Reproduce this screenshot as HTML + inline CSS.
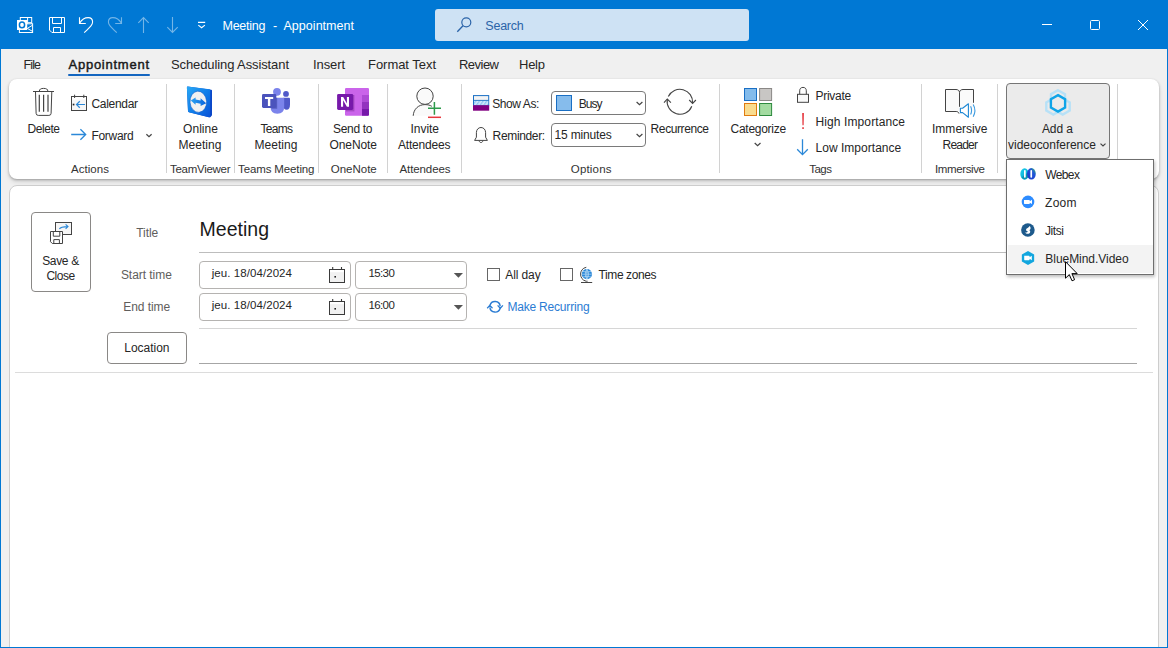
<!DOCTYPE html><html><head><meta charset="utf-8"><title>Meeting - Appointment</title><style>
html,body{margin:0;padding:0}
body{width:1168px;height:648px;overflow:hidden;position:relative;background:#f0f0f0;font-family:"Liberation Sans",sans-serif;}
.a{position:absolute}
.t{position:absolute;white-space:pre;line-height:16px;height:16px}
svg{position:absolute;overflow:visible}
#tb{left:0;top:0;width:1168px;height:49px;background:#0078d4}
#search{left:435px;top:9px;width:314px;height:32px;background:#cee2f4;border-radius:3px}
#rib{left:9px;top:79px;width:1150px;height:99.5px;background:#fff;border-radius:8px;box-shadow:0 1px 2.5px rgba(0,0,0,.3),0 3px 5px rgba(0,0,0,.10)}
#form{left:9px;top:184.6px;width:1147.5px;height:480px;background:#fff;border:1px solid #cdcdcd;border-radius:8px;box-sizing:content-box}
.sep{position:absolute;width:1px;top:84px;height:89px;background:#d2d2d2}
.combo{position:absolute;box-sizing:border-box;border:1px solid #7a7a7a;border-radius:4px;background:#fff}
.box{position:absolute;box-sizing:border-box;border:1px solid #b5b3b1;border-radius:4px;background:#fff}
.cb{position:absolute;box-sizing:border-box;border:1px solid #666;background:#fff;width:13px;height:13px}
.hl{position:absolute;height:1px}
</style></head><body>
<div class="a" id="tb"></div>
<div class="a" id="search"></div>
<div class="a" id="rib"></div>
<div class="a" id="form"></div>
<div class="a" style="left:68px;top:73.7px;width:81.5px;height:2px;background:#1466c0;border-radius:1px"></div>
<div class="sep" style="left:166px"></div>
<div class="sep" style="left:234px"></div>
<div class="sep" style="left:318px"></div>
<div class="sep" style="left:387px"></div>
<div class="sep" style="left:461px"></div>
<div class="sep" style="left:719px"></div>
<div class="sep" style="left:921px"></div>
<div class="sep" style="left:997px"></div>
<div class="sep" style="left:1117px"></div>
<div class="a" style="left:1006px;top:83px;width:104px;height:76px;box-sizing:border-box;background:#ebebeb;border:1px solid #767676;border-radius:4px"></div>
<div class="combo" style="left:551px;top:91px;width:95px;height:24px"></div>
<div class="combo" style="left:551px;top:123.3px;width:95px;height:23.7px"></div>
<div class="a" style="left:555.5px;top:95px;width:16.7px;height:15.8px;box-sizing:border-box;background:#86bcec;border:1px solid #1a6fc4"></div>
<div class="a" style="left:31px;top:212px;width:60px;height:79.5px;box-sizing:border-box;border:1px solid #8a8886;border-radius:4px;background:#fff"></div>
<div class="hl" style="left:199px;top:252px;width:938px;background:#bdbdbd"></div>
<div class="hl" style="left:199px;top:328px;width:938px;background:#d6d6d6"></div>
<div class="hl" style="left:199px;top:363px;width:938px;background:#a6a6a6"></div>
<div class="hl" style="left:15px;top:372px;width:1138px;background:#dcdcdc"></div>
<div class="box" style="left:199px;top:261px;width:152px;height:28px"></div>
<div class="box" style="left:355px;top:261px;width:111.5px;height:28px"></div>
<div class="box" style="left:199px;top:293px;width:152px;height:28px"></div>
<div class="box" style="left:355px;top:293px;width:111.5px;height:28px"></div>
<div class="cb" style="left:487px;top:268px"></div>
<div class="cb" style="left:560px;top:268px"></div>
<div class="a" style="left:107px;top:332.3px;width:80px;height:31.5px;box-sizing:border-box;border:1px solid #8a8886;border-radius:4px;background:#fff"></div>
<div class="a" style="left:1006px;top:159.3px;width:148px;height:115.7px;box-sizing:border-box;background:#fff;border:1px solid #6e6e6e;box-shadow:1px 2px 3px rgba(0,0,0,.25)"></div>
<div class="a" style="left:1007.5px;top:245.3px;width:145px;height:27.7px;background:#f3f3f3"></div>
<svg style="left:0;top:0" width="1168" height="648" viewBox="0 0 1168 648">
<defs>
<linearGradient id="tvg" x1="0" y1="0" x2="1" y2="1"><stop offset="0" stop-color="#29a8f5"/><stop offset=".55" stop-color="#0f7be8"/><stop offset="1" stop-color="#0a52d6"/></linearGradient>
<linearGradient id="tva" x1="0" y1="0" x2="1" y2="0"><stop offset="0" stop-color="#2aa2f2"/><stop offset="1" stop-color="#0a63dc"/></linearGradient>
<linearGradient id="wbl" x1="0" y1="0" x2="1" y2="1"><stop offset="0" stop-color="#18d0ee"/><stop offset="1" stop-color="#0aa0c8"/></linearGradient>
<linearGradient id="wbr" x1="0" y1="1" x2="1" y2="0"><stop offset="0" stop-color="#1a35c8"/><stop offset=".65" stop-color="#1f55d8"/><stop offset="1" stop-color="#38c860"/></linearGradient>
<pattern id="hatch" width="3" height="3" patternUnits="userSpaceOnUse" patternTransform="rotate(35)"><rect width="3" height="3" fill="#d6ebfb"/><rect width="1.4" height="3" fill="#8cc6f4"/></pattern>
</defs>
<rect x="20.3" y="17.5" width="11.4" height="9" fill="none" stroke="#fff" stroke-width="1"/>
<path d="M27.6 17.5 V24 M27.6 22.7 H31.7" stroke="#fff" stroke-width="1" fill="none" />
<rect x="19.4" y="23.8" width="13.2" height="8.7" fill="#0078d4" stroke="#fff" stroke-width="1"/>
<path d="M32.6 25.2 L27.3 28.4 L32.6 31.4" stroke="#fff" stroke-width="1" fill="none" />
<rect x="17" y="20" width="10.2" height="10" fill="#fff"/>
<ellipse cx="22" cy="24.9" rx="2.6" ry="2.8" fill="none" stroke="#0078d4" stroke-width="1.5"/>
<path d="M49.5 17.5 H64.5 V32.5 H51.9 L49.5 30.1 Z M52.5 17.5 V23.5 H61.5 V17.5 M53.5 32.4 V27.5 H60.5 V32.4" stroke="#fff" stroke-width="1" fill="none" />
<path d="M79.5 17.2 V23.5 H85.8 M79.6 23.3 C81.5 20 84.8 17.6 88.2 17.6 C90.9 17.6 92.6 19.5 92.6 22 C92.6 24.6 91 26.2 84.2 32.7" stroke="#fff" stroke-width="1.1" fill="none" />
<path d="M121.5 17.2 V23.5 H115.2 M121.4 23.3 C119.5 20 116.2 17.6 112.8 17.6 C110.1 17.6 108.4 19.5 108.4 22 C108.4 24.6 110 26.2 116.8 32.7" stroke="rgba(255,255,255,.45)" stroke-width="1.1" fill="none" />
<path d="M143.5 17.6 V33 M138.3 22.9 L143.5 17.6 L148.7 22.9" stroke="rgba(255,255,255,.45)" stroke-width="1.1" fill="none" />
<path d="M172.5 17 V32.4 M167.3 27.1 L172.5 32.4 L177.7 27.1" stroke="rgba(255,255,255,.45)" stroke-width="1.1" fill="none" />
<path d="M198 22.4 H205.2 M198.3 25.1 L201.6 27.8 L204.9 25.1" stroke="#fff" stroke-width="1.1" fill="none" />
<circle cx="466.3" cy="22.3" r="4.5" fill="none" stroke="#2b64a8" stroke-width="1.2"/>
<path d="M463 25.7 L457.3 31.8" stroke="#2b64a8" stroke-width="1.3" fill="none" />
<path d="M1042 24.5 H1052" stroke="#fff" stroke-width="1" fill="none" />
<rect x="1090.5" y="20.5" width="9" height="9" rx="1" fill="none" stroke="#fff" stroke-width="1"/>
<path d="M1138 20 L1148 30 M1148 20 L1138 30" stroke="#fff" stroke-width="1" fill="none" />
<path d="M33 91.5 H54 M39.3 91.5 C39.3 89 41 88.4 43.6 88.4 C46.2 88.4 47.9 89 47.9 91.5 M35.5 91.5 L36.1 113.3 Q36.2 115.4 38.3 115.4 H48.9 Q51 115.4 51.1 113.3 L51.8 91.5 " stroke="#444" stroke-width="1" fill="none" />
<path d="M39.3 94.8 V111.7 M43.6 94.8 V111.7 M48 94.8 V111.7" stroke="#444" stroke-width="1.2" fill="none" />
<rect x="71.5" y="96.5" width="15" height="14" fill="#f6f6f6" stroke="#444" stroke-width="1"/>
<rect x="72" y="97" width="14" height="2.6" fill="#fff"/>
<path d="M74.6 94.7 V98 M83.8 94.7 V98" stroke="#444" stroke-width="1" fill="none" />
<path d="M85 104.5 H76.8 M79.8 101.3 L76.5 104.5 L79.8 107.7" stroke="#2b88d8" stroke-width="1.2" fill="none" />
<rect x="72.7" y="103.7" width="1.7" height="1.7" fill="#222"/>
<path d="M71.2 134.5 H85.4 M80.4 129.2 L85.7 134.5 L80.4 139.8" stroke="#2b88d8" stroke-width="1.3" fill="none" />
<path d="M146.4 134.2 L149 136.7 L151.6 134.2" stroke="#444" stroke-width="1.2" fill="none" />
<path d="M187.6 86.6 Q186.9 86.7 186.9 87.6 L188 111 Q188 112 189 112.3 L209 117.3 Q210 117.5 210.6 116.9 L212 115.2 V90.6 Q212 89.8 211.2 89.7 Z" fill="#0b47c8"/>
<path d="M187.6 86.6 Q186.9 86.7 186.9 87.6 L188 111 Q188 112 189 112.3 L209 117.3 Q210 117.4 210 116.4 L210.3 90.2 Q210.3 89.3 209.5 89.2 Z" fill="url(#tvg)"/>
<ellipse cx="198.3" cy="101.8" rx="8.3" ry="10.6" fill="#f1f1f1" stroke="#1560c8" stroke-width=".6" transform="rotate(-4 198.3 101.8)"/>
<path d="M190.8 100.6 L195.6 97.6 V99.6 L200.6 100.6 V98.2 L206.2 103.2 L200.6 106 V103.8 L195.6 102.8 V104.8 Z" fill="url(#tva)"/>
<circle cx="286" cy="93.9" r="2.9" fill="#5059c9"/>
<path d="M283.2 97.8 H289 Q290 97.8 290 98.8 V104.5 Q290 109.8 286.5 109.8 Q283.2 109.8 283.2 105 Z" fill="#5059c9"/>
<circle cx="277" cy="91.8" r="3.9" fill="#7b83eb"/>
<path d="M270.5 97.8 H283.2 Q284.2 97.8 284.2 98.8 V106.8 Q284.2 113.7 277.3 113.7 Q270.5 113.7 270.5 106.8 Z" fill="#7b83eb"/>
<path d="M271 97.8 H277.2 V108.8 H271.6 Q270.5 106 270.5 104 Z" fill="#3d44a0" opacity=".55"/>
<rect x="262" y="93.9" width="14.3" height="14" rx="1.4" fill="#4b53bc"/>
<path d="M265 97 H273.2 V99.1 H270.3 V106 H267.9 V99.1 H265 Z" fill="#fff"/>
<rect x="345" y="87.9" width="24" height="27.9" rx="1.2" fill="#ca64ea"/>
<rect x="362" y="95" width="7" height="7" fill="#ae4bd5"/>
<rect x="362" y="102" width="7" height="7" fill="#9332bf"/>
<path d="M362 109 H369 V114.6 Q369 115.8 367.8 115.8 H362 Z" fill="#7719aa"/>
<rect x="346" y="95" width="8.4" height="16.4" fill="#7a2a9a" opacity=".45"/>
<rect x="337.1" y="93.9" width="16.1" height="16.1" rx="1.4" fill="#7719aa"/>
<path d="M341 106.7 V97 H343.2 L346.9 103.4 V97 H349 V106.7 H346.9 L343.1 100.2 V106.7 Z" fill="#fff"/>
<path d="M413.2 115.8 C413.6 109 418.5 104.6 425 104.6 C428 104.6 430.5 105.4 432 106.4 V115.8 Z" fill="#fafafa"/>
<path d="M413.2 115.8 C413.6 109 418.5 104.6 425 104.6 C428 104.6 430.3 105.3 431.8 106.3" stroke="#444" stroke-width="1" fill="none" />
<circle cx="425" cy="96.2" r="8.2" fill="#fafafa" stroke="#444" stroke-width="1"/>
<path d="M434.4 102 V114.8 M428 108.3 H441" stroke="#2d9a4b" stroke-width="1.5" fill="none" />
<path d="M428 117.3 H441" stroke="#e8383d" stroke-width="1.5" fill="none" />
<rect x="473.5" y="95.6" width="15.2" height="9.6" fill="#f4f4f4" stroke="#1a6fc4" stroke-width="1"/>
<rect x="474" y="100.6" width="14.2" height="4.2" fill="url(#hatch)"/>
<path d="M473.5 100.4 H488.7" stroke="#1a6fc4" stroke-width="0.9" fill="none" />
<rect x="473" y="105.2" width="16.2" height="5.5" fill="#800080"/>
<path d="M474.6 140.4 H487.4 L485.6 137.2 V132.6 C485.6 129.6 483.6 127.5 481 127.5 C478.4 127.5 476.4 129.6 476.4 132.6 V137.2 Z M479.2 140.8 C479.4 143.1 482.6 143.1 482.8 140.8" stroke="#444" stroke-width="1" fill="none" stroke-linejoin="round"/>
<path d="M636.6 102 L639.5 104.7 L642.4 102" stroke="#444" stroke-width="1.2" fill="none" />
<path d="M636.6 134 L639.5 136.7 L642.4 134" stroke="#444" stroke-width="1.2" fill="none" />
<path d="M668.3 96.5 A12.8 12.8 0 0 1 692.6 103 M691.8 106.2 A12.8 12.8 0 0 1 667.3 99.3" stroke="#444" stroke-width="1.1" fill="none" />
<path d="M689.2 100 L692.6 103.4 L695.9 100 M664 102.7 L667.3 99 L670.9 102.7" stroke="#444" stroke-width="1.1" fill="none" />
<rect x="744.5" y="88.5" width="12" height="12" fill="#83bbeb" stroke="#1a6fc4" stroke-width="1"/>
<rect x="759.6" y="88.5" width="12" height="12" fill="#c8c6c4" stroke="#8a8886" stroke-width="1"/>
<rect x="744.5" y="103.5" width="12" height="12" fill="#f9dc8f" stroke="#e07b10" stroke-width="1"/>
<rect x="759.6" y="103.5" width="12" height="12" fill="#a3dba1" stroke="#2d8a3e" stroke-width="1"/>
<path d="M754.7 143 L757.6 145.7 L760.5 143" stroke="#444" stroke-width="1.2" fill="none" />
<rect x="797.5" y="94.3" width="11" height="8" fill="#fafafa" stroke="#444" stroke-width="1"/>
<path d="M799.7 94.3 V90.8 C799.7 88.5 801 87.4 803 87.4 C805 87.4 806.3 88.5 806.3 90.8 V94.3" stroke="#444" stroke-width="1" fill="none" />
<path d="M802.1 113 H804 L803.7 125.2 H802.4 Z" fill="#e8484f"/><rect x="802.2" y="127.2" width="1.7" height="1.8" fill="#e8484f"/>
<path d="M802.5 139.2 V154.4 M797.2 149.2 L802.5 154.6 L807.8 149.2" stroke="#2b88d8" stroke-width="1.3" fill="none" />
<path d="M945.5 89.5 H956 C958 89.5 959.5 90.8 959.5 92.5 C959.5 90.8 961 89.5 963 89.5 H973.5 V111.5 H945.5 Z" fill="#fafafa"/>
<path d="M959.5 106.8 V92.3 C959.3 90.6 958 89.5 956 89.5 H945.5 V111.5 H956.2 C957.6 111.5 958.6 112.2 959 113.6 M959.5 92.3 C959.7 90.6 961 89.5 963 89.5 H973.5 V102.8" stroke="#444" stroke-width="1" fill="none" />
<path d="M960.4 108.2 H962.6 L968.4 103.8 V117.2 L962.6 112.6 H960.4 Z" fill="#fff" stroke="#1e88d4" stroke-width="1.1" stroke-linejoin="round"/>
<path d="M970.6 106.3 Q972.6 110.4 970.6 114.6 M973.2 104.5 Q976.6 110.4 973.2 116.8" stroke="#3d9be0" stroke-width="1.1" fill="none" />
<polygon points="1058.00,90.20 1065.01,94.25 1065.01,102.35 1058.00,106.40 1050.99,102.35 1050.99,94.25" fill="none" stroke="#b7e1f7" stroke-width="2.4"/>
<polygon points="1053.30,98.30 1060.31,102.35 1060.31,110.45 1053.30,114.50 1046.29,110.45 1046.29,102.35" fill="none" stroke="#b7e1f7" stroke-width="2.4"/>
<polygon points="1062.70,98.30 1069.71,102.35 1069.71,110.45 1062.70,114.50 1055.69,110.45 1055.69,102.35" fill="none" stroke="#b7e1f7" stroke-width="2.4"/>
<polygon points="1058.00,95.15 1065.10,99.25 1065.10,107.45 1058.00,111.55 1050.90,107.45 1050.90,99.25" fill="#ebebeb" stroke="#0ea4e8" stroke-width="2.4"/>
<path d="M1100.5 143.6 L1103 145.9 L1105.5 143.6" stroke="#444" stroke-width="1.2" fill="none" />
</svg>
<svg style="left:0;top:0" width="1168" height="648" viewBox="0 0 1168 648">
<ellipse cx="1024.6" cy="174" rx="4.3" ry="5.8" fill="url(#wbl)"/>
<path d="M1021.5 177.5 Q1024.5 181 1028 177.5 L1027 173 Z" fill="#0b8aa8" opacity=".75"/>
<ellipse cx="1031.4" cy="173.8" rx="4.4" ry="5.8" fill="url(#wbr)"/>
<rect x="1024" y="170" width="1.7" height="7.8" rx=".8" fill="#fff"/><rect x="1030.4" y="170" width="1.7" height="7.8" rx=".8" fill="#fff"/>
<circle cx="1028" cy="201.9" r="6.3" fill="#2d8cff"/>
<path d="M1024 200 H1029.2 Q1029.8 200 1029.8 200.6 V201.2 L1032 199.8 V204.1 L1029.8 202.7 V203.3 Q1029.8 203.9 1029.2 203.9 H1024.6 Q1024 203.9 1024 203.3 Z" fill="#fff"/>
<circle cx="1027.9" cy="230" r="6.8" fill="#1d5a8c"/>
<path d="M1029.6 226 C1031 227.2 1031 229.2 1029.4 230.3 C1030.6 231 1030.6 232.6 1029.2 233.4 C1027.6 234 1025.6 233.4 1025.2 232.4 C1026.4 232.6 1027.6 232.2 1027.8 231.2 C1026.2 231.2 1025.6 230 1026.4 228.8 C1027.4 228.2 1028.6 227.4 1029.6 226 Z" fill="#fff"/>
<polygon points="1028.00,250.90 1034.15,254.45 1034.15,261.55 1028.00,265.10 1021.85,261.55 1021.85,254.45" fill="#12a6de"/>
<path d="M1024.2 255.8 H1029 Q1029.6 255.8 1029.6 256.4 V257.2 L1031.8 255.8 V260.2 L1029.6 258.8 V259.6 Q1029.6 260.2 1029 260.2 H1024.8 Q1024.2 260.2 1024.2 259.6 Z" fill="#fff"/>
<rect x="55.5" y="222.5" width="16" height="12" fill="#f6f6f6" stroke="#444" stroke-width="1"/>
<path d="M59.4 229 C60.4 227 62.5 226.6 67.8 226.6 M65.6 224.4 L68 226.6 L65.6 228.8" stroke="#2b88d8" stroke-width="1.1" fill="none" />
<path d="M50.5 231.5 H62.5 V243.5 H52.3 L50.5 241.7 Z" fill="#fff" stroke="#444" stroke-width="1"/>
<path d="M53.3 231.5 V236.2 H59.8 V231.5 M53.8 243.5 V239.6 H59.4 V243.5" stroke="#444" stroke-width="1" fill="none" />
<rect x="329.5" y="269.5" width="15" height="13" fill="#f1f1f1" stroke="#3a3a3a" stroke-width="1"/>
<rect x="330" y="270" width="14" height="2.2" fill="#fff"/>
<path d="M332.7 267 V270 M341.5 267 V270" stroke="#3a3a3a" stroke-width="1.1" fill="none" />
<rect x="334.4" y="276" width="1.6" height="1.6" fill="#222"/>
<path d="M453.8 273 H463 L458.4 277.7 Z" fill="#555"/>
<rect x="329.5" y="301.5" width="15" height="13" fill="#f1f1f1" stroke="#3a3a3a" stroke-width="1"/>
<rect x="330" y="302" width="14" height="2.2" fill="#fff"/>
<path d="M332.7 299 V302 M341.5 299 V302" stroke="#3a3a3a" stroke-width="1.1" fill="none" />
<rect x="334.4" y="308" width="1.6" height="1.6" fill="#222"/>
<path d="M453.8 305 H463 L458.4 309.7 Z" fill="#555"/>
<circle cx="586.9" cy="274.2" r="5.1" fill="#2b88d8"/>
<path d="M581.9 274.2 H591.9 M586.9 269.2 V279.2 M582.8 271.4 Q586.9 272.8 591 271.4 M582.8 277 Q586.9 275.6 591 277 M586.9 269.2 Q583.6 274.2 586.9 279.2 M586.9 269.2 Q590.2 274.2 586.9 279.2" stroke="#cfe7fa" stroke-width="0.6" fill="none" />
<path d="M586.3 267.3 C578.8 268.6 578.6 279.4 586 281.2" stroke="#444" stroke-width="1" fill="none" />
<path d="M586.9 280.6 V282.5 M581 282.5 H592.2" stroke="#444" stroke-width="1" fill="none" />
<path d="M490 305.4 A5.2 5.2 0 0 1 500.2 306.2 M500.1 308.2 A5.2 5.2 0 0 1 489.9 307.4" stroke="#2b7cd3" stroke-width="1.4" fill="none" />
<path d="M497.6 305.4 L500.3 308.2 L502.9 305.4 M487.2 308.2 L489.8 305.4 L492.5 308.2" stroke="#2b7cd3" stroke-width="1.3" fill="none" />
</svg>
<span class="t" id="t0" style="left:222.50px;top:17.67px;font-size:12.5px;color:#fff;letter-spacing:-0.247px;">Meeting</span>
<span class="t" id="t1" style="left:273.00px;top:17.67px;font-size:12.5px;color:#fff;">-</span>
<span class="t" id="t2" style="left:283.50px;top:17.67px;font-size:12.5px;color:#fff;letter-spacing:0.031px;">Appointment</span>
<span class="t" id="t3" style="left:485.30px;top:17.67px;font-size:12.5px;color:#2b64a8;letter-spacing:-0.222px;">Search</span>
<span class="t" id="t4" style="left:23.50px;top:56.67px;font-size:12.5px;color:#262626;letter-spacing:-0.885px;">File</span>
<span class="t" id="t5" style="left:68.50px;top:56.50px;font-size:13px;color:#1a1a1a;-webkit-text-stroke:.45px currentColor;letter-spacing:0.750px;">Appointment</span>
<span class="t" id="t6" style="left:171.00px;top:56.50px;font-size:13px;color:#262626;letter-spacing:-0.104px;">Scheduling Assistant</span>
<span class="t" id="t7" style="left:313.00px;top:56.50px;font-size:13px;color:#262626;letter-spacing:-0.103px;">Insert</span>
<span class="t" id="t8" style="left:368.00px;top:56.50px;font-size:13px;color:#262626;letter-spacing:-0.039px;">Format Text</span>
<span class="t" id="t9" style="left:459.00px;top:56.50px;font-size:13px;color:#262626;letter-spacing:-0.525px;">Review</span>
<span class="t" id="t10" style="left:519.00px;top:56.50px;font-size:13px;color:#262626;letter-spacing:-0.250px;">Help</span>
<span class="t" id="t11" style="left:27.50px;top:120.84px;font-size:12px;color:#262626;letter-spacing:-0.438px;">Delete</span>
<span class="t" id="t12" style="left:91.50px;top:95.84px;font-size:12px;color:#262626;letter-spacing:-0.315px;">Calendar</span>
<span class="t" id="t13" style="left:91.50px;top:127.84px;font-size:12px;color:#262626;letter-spacing:-0.319px;">Forward</span>
<span class="t" id="t14" style="left:183.00px;top:120.84px;font-size:12px;color:#262626;letter-spacing:0.062px;">Online</span>
<span class="t" id="t15" style="left:178.50px;top:136.54px;font-size:12px;color:#262626;letter-spacing:0.049px;">Meeting</span>
<span class="t" id="t16" style="left:260.50px;top:120.84px;font-size:12px;color:#262626;letter-spacing:-0.711px;">Teams</span>
<span class="t" id="t17" style="left:254.50px;top:136.54px;font-size:12px;color:#262626;letter-spacing:0.049px;">Meeting</span>
<span class="t" id="t18" style="left:333.00px;top:120.84px;font-size:12px;color:#262626;letter-spacing:-0.312px;">Send to</span>
<span class="t" id="t19" style="left:329.50px;top:136.54px;font-size:12px;color:#262626;letter-spacing:-0.089px;">OneNote</span>
<span class="t" id="t20" style="left:410.50px;top:120.84px;font-size:12px;color:#262626;letter-spacing:-0.037px;">Invite</span>
<span class="t" id="t21" style="left:398.00px;top:136.54px;font-size:12px;color:#262626;letter-spacing:-0.193px;">Attendees</span>
<span class="t" id="t22" style="left:492.20px;top:95.84px;font-size:12px;color:#262626;letter-spacing:-0.404px;">Show As:</span>
<span class="t" id="t23" style="left:578.70px;top:95.84px;font-size:12px;color:#262626;letter-spacing:-0.963px;">Busy</span>
<span class="t" id="t24" style="left:492.60px;top:128.04px;font-size:12px;color:#262626;letter-spacing:-0.345px;">Reminder:</span>
<span class="t" id="t25" style="left:554.60px;top:126.54px;font-size:12px;color:#262626;letter-spacing:-0.167px;">15 minutes</span>
<span class="t" id="t26" style="left:650.60px;top:120.84px;font-size:12px;color:#262626;letter-spacing:-0.403px;">Recurrence</span>
<span class="t" id="t27" style="left:730.60px;top:120.84px;font-size:12px;color:#262626;letter-spacing:-0.281px;">Categorize</span>
<span class="t" id="t28" style="left:815.50px;top:87.84px;font-size:12px;color:#262626;letter-spacing:-0.268px;">Private</span>
<span class="t" id="t29" style="left:815.50px;top:113.84px;font-size:12px;color:#262626;letter-spacing:0.104px;">High Importance</span>
<span class="t" id="t30" style="left:815.50px;top:139.64px;font-size:12px;color:#262626;letter-spacing:0.028px;">Low Importance</span>
<span class="t" id="t31" style="left:932.00px;top:120.84px;font-size:12px;color:#262626;letter-spacing:0.020px;">Immersive</span>
<span class="t" id="t32" style="left:942.50px;top:136.54px;font-size:12px;color:#262626;letter-spacing:-0.772px;">Reader</span>
<span class="t" id="t33" style="left:1042.00px;top:120.84px;font-size:12px;color:#262626;letter-spacing:-0.140px;">Add a</span>
<span class="t" id="t34" style="left:1008.00px;top:137.14px;font-size:12px;color:#262626;letter-spacing:-0.012px;">videoconference</span>
<span class="t" id="t35" style="left:71.00px;top:161.02px;font-size:11.5px;color:#333333;letter-spacing:0.047px;">Actions</span>
<span class="t" id="t36" style="left:170.00px;top:161.02px;font-size:11.5px;color:#333333;letter-spacing:-0.286px;">TeamViewer</span>
<span class="t" id="t37" style="left:238.00px;top:161.02px;font-size:11.5px;color:#333333;letter-spacing:-0.124px;">Teams Meeting</span>
<span class="t" id="t38" style="left:330.75px;top:161.02px;font-size:11.5px;color:#333333;letter-spacing:-0.005px;">OneNote</span>
<span class="t" id="t39" style="left:399.50px;top:161.02px;font-size:11.5px;color:#333333;letter-spacing:-0.100px;">Attendees</span>
<span class="t" id="t40" style="left:570.75px;top:161.02px;font-size:11.5px;color:#333333;letter-spacing:0.185px;">Options</span>
<span class="t" id="t41" style="left:809.25px;top:161.02px;font-size:11.5px;color:#333333;letter-spacing:-0.516px;">Tags</span>
<span class="t" id="t42" style="left:935.00px;top:161.02px;font-size:11.5px;color:#333333;letter-spacing:-0.379px;">Immersive</span>
<span class="t" id="t43" style="left:1045.20px;top:167.24px;font-size:12px;color:#262626;letter-spacing:-0.610px;">Webex</span>
<span class="t" id="t44" style="left:1045.10px;top:194.54px;font-size:12px;color:#262626;letter-spacing:0.238px;">Zoom</span>
<span class="t" id="t45" style="left:1045.00px;top:223.24px;font-size:12px;color:#262626;letter-spacing:-0.443px;">Jitsi</span>
<span class="t" id="t46" style="left:1045.30px;top:250.54px;font-size:12px;color:#262626;letter-spacing:-0.042px;">BlueMind.Video</span>
<span class="t" id="t47" style="left:42.20px;top:252.84px;font-size:12px;color:#262626;letter-spacing:-0.341px;">Save &amp;</span>
<span class="t" id="t48" style="left:46.40px;top:268.14px;font-size:12px;color:#262626;letter-spacing:-0.497px;">Close</span>
<span class="t" id="t49" style="left:136.30px;top:225.04px;font-size:12px;color:#605e5c;letter-spacing:-0.084px;">Title</span>
<span class="t" id="t50" style="left:199.50px;top:221.24px;font-size:19.5px;color:#1a1a1a;letter-spacing:0.021px;">Meeting</span>
<span class="t" id="t51" style="left:120.90px;top:266.54px;font-size:12px;color:#605e5c;letter-spacing:-0.040px;">Start time</span>
<span class="t" id="t52" style="left:123.30px;top:298.54px;font-size:12px;color:#605e5c;letter-spacing:-0.066px;">End time</span>
<span class="t" id="t53" style="left:211.70px;top:264.92px;font-size:11.5px;color:#262626;letter-spacing:0.072px;">jeu. 18/04/2024</span>
<span class="t" id="t54" style="left:211.70px;top:296.82px;font-size:11.5px;color:#262626;letter-spacing:0.072px;">jeu. 18/04/2024</span>
<span class="t" id="t55" style="left:368.40px;top:264.92px;font-size:11.5px;color:#262626;letter-spacing:-0.595px;">15:30</span>
<span class="t" id="t56" style="left:368.40px;top:296.82px;font-size:11.5px;color:#262626;letter-spacing:-0.595px;">16:00</span>
<span class="t" id="t57" style="left:505.30px;top:266.54px;font-size:12px;color:#262626;letter-spacing:-0.105px;">All day</span>
<span class="t" id="t58" style="left:598.50px;top:266.54px;font-size:12px;color:#262626;letter-spacing:-0.386px;">Time zones</span>
<span class="t" id="t59" style="left:507.40px;top:299.24px;font-size:12px;color:#2b7cd3;letter-spacing:-0.193px;">Make Recurring</span>
<span class="t" id="t60" style="left:124.30px;top:340.14px;font-size:12px;color:#262626;letter-spacing:-0.025px;">Location</span>
<svg style="left:1065px;top:261px" width="14" height="21" viewBox="0 0 14 21"><path d="M0.5 0.7 V17.2 L4.3 13.6 L7 19.8 L9.6 18.7 L6.9 12.6 H12.2 Z" fill="#fff" stroke="#000" stroke-width="1" stroke-linejoin="miter"/></svg>
<div class="a" style="left:0;top:0;width:1px;height:648px;background:#0078d4"></div>
<div class="a" style="left:1167px;top:0;width:1px;height:648px;background:#0078d4"></div>
<div class="a" style="left:0;top:647px;width:1168px;height:1px;background:#0078d4"></div>
</body></html>
